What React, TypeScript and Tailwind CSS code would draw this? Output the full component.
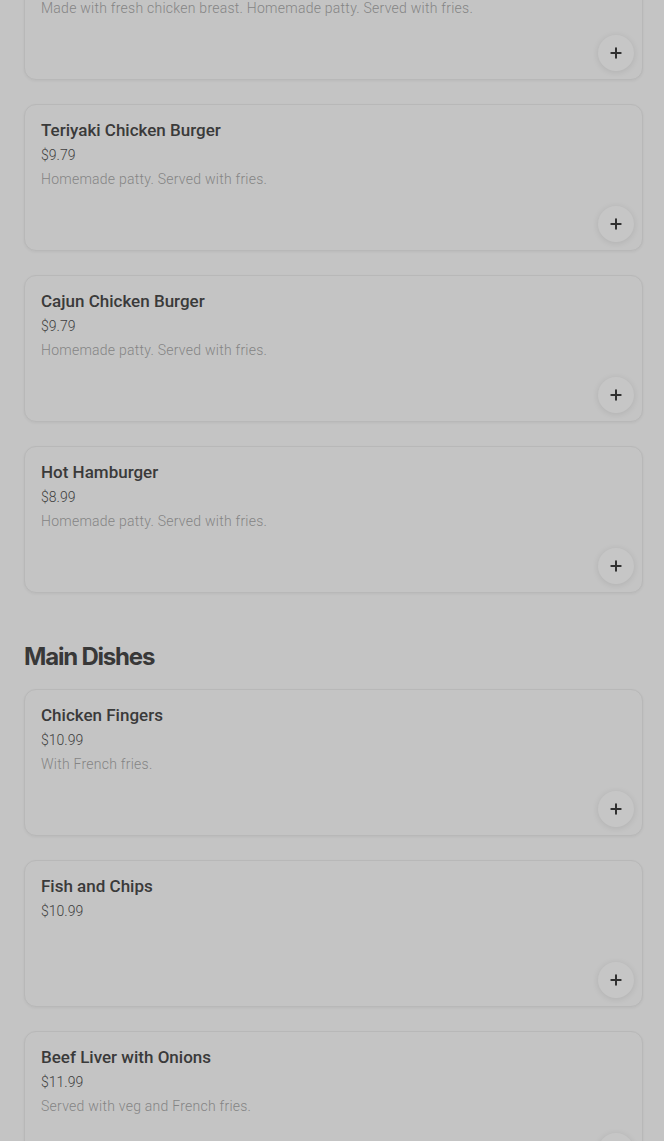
import {Plus} from 'lucide-react';

type Item = {name: string; price: string; desc?: string};

const burgers: Item[] = [
    {name: 'Chicken Breast Burger', price: '$9.79', desc: 'Made with fresh chicken breast. Homemade patty. Served with fries.'},
    {name: 'Teriyaki Chicken Burger', price: '$9.79', desc: 'Homemade patty. Served with fries.'},
    {name: 'Cajun Chicken Burger', price: '$9.79', desc: 'Homemade patty. Served with fries.'},
    {name: 'Hot Hamburger', price: '$8.99', desc: 'Homemade patty. Served with fries.'},
];

const mains: Item[] = [
    {name: 'Chicken Fingers', price: '$10.99', desc: 'With French fries.'},
    {name: 'Fish and Chips', price: '$10.99'},
    {name: 'Beef Liver with Onions', price: '$11.99', desc: 'Served with veg and French fries.'},
    {name: 'Pork Chops', price: '$12.99', desc: 'Served with veg and French fries.'},
];

function MenuCard({item}: {item: Item}) {
    return (
        <div className="relative h-[147px] rounded-xl border border-[#b8b8b8] bg-[#c4c4c4] px-4 pt-[13px] shadow-[0_1px_3px_rgba(0,0,0,0.05)]">
            <h3 className="text-[17px] leading-6 font-medium text-[#3a3a3a]">{item.name}</h3>
            <p className="mt-px text-sm leading-6 font-light text-[#3e3e3e]">{item.price}</p>
            {item.desc && (
                <p className="text-sm leading-6 font-light tracking-[0.25px] text-[#858585]">{item.desc}</p>
            )}
            <button
                type="button"
                className="absolute right-2 bottom-2 flex h-9 w-9 items-center justify-center rounded-full bg-[#c6c6c6] shadow-[0_1px_6px_rgba(0,0,0,0.1)]"
            >
                <Plus size={16} strokeWidth={3} className="text-[#303030]" />
            </button>
        </div>
    );
}

function Section({title, items}: {title?: string; items: Item[]}) {
    return (
        <section>
            {title && (
                <h2 className="mb-4 font-['Inter',sans-serif] text-2xl leading-8 font-bold tracking-tighter text-[#383838]">
                    {title}
                </h2>
            )}
            <div className="flex flex-col gap-6">
                {items.map((item) => (
                    <MenuCard key={item.name} item={item} />
                ))}
            </div>
        </section>
    );
}

export default function App() {
    return (
        <div className="h-[1141px] overflow-hidden bg-[#c4c4c4] font-['Roboto',sans-serif]">
            <div className="-mt-[67px] flex flex-col gap-12 pr-[21px] pl-6">
                <Section items={burgers} />
                <Section title="Main Dishes" items={mains} />
            </div>
        </div>
    );
}
